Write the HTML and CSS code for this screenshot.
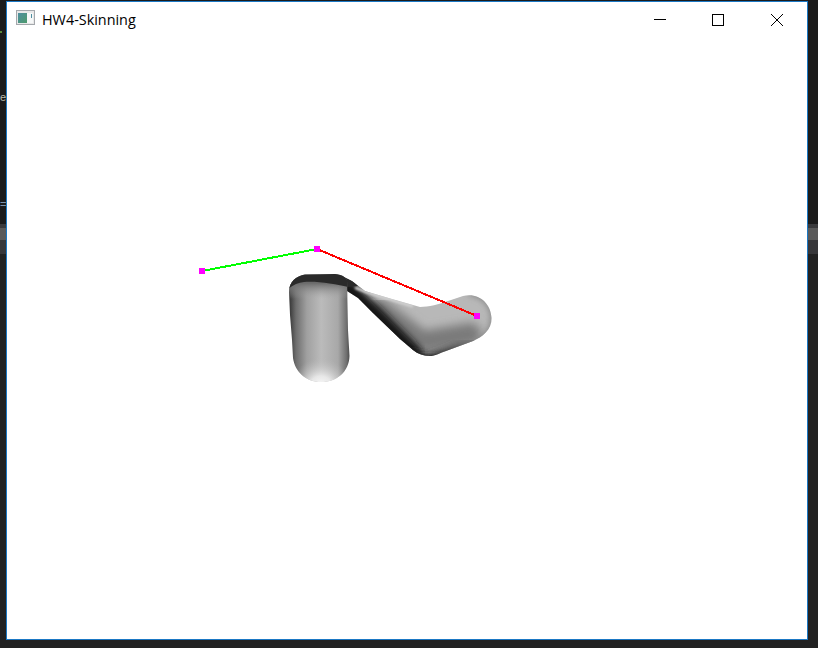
FILE: index.html
```html
<!DOCTYPE html>
<html lang="en">
<head>
<meta charset="utf-8">
<title>HW4-Skinning</title>
<link rel="stylesheet" href="styles.css">
</head>
<body>
<span class="stray stray-e">e</span>
<span class="stray stray-eq">=</span>
<span class="stray stray-dot"></span>
<main class="window">
  <header class="titlebar">
    <svg class="app-icon" width="20" height="16" viewBox="0 0 20 16">
      <defs>
        <linearGradient id="iconFill" x1="0" y1="0" x2="1" y2="1">
          <stop offset="0" stop-color="#4f8fa0"/>
          <stop offset="1" stop-color="#4d9a6c"/>
        </linearGradient>
      </defs>
      <rect x="0.5" y="0.5" width="18" height="14" fill="#e8e8e8" stroke="#a4a8ac"/>
      <rect x="2" y="3" width="9" height="10" fill="url(#iconFill)"/>
      <rect x="11" y="3" width="6" height="10" fill="#f6f8f8"/>
      <rect x="15" y="4" width="1" height="4" fill="#4f8fa0"/>
    </svg>
    <span class="title">HW4-Skinning</span>
    <div class="controls">
      <button class="control" aria-label="Minimize">
        <svg width="12" height="12" viewBox="0 0 12 12"><path d="M0 5.5H12" stroke="#000" fill="none"/></svg>
      </button>
      <button class="control" aria-label="Maximize">
        <svg width="12" height="12" viewBox="0 0 12 12"><rect x="0.5" y="0.5" width="11" height="11" stroke="#000" fill="none"/></svg>
      </button>
      <button class="control" aria-label="Close">
        <svg width="12" height="12" viewBox="0 0 12 12"><path d="M0 0L12 12M12 0L0 12" stroke="#000" fill="none"/></svg>
      </button>
    </div>
  </header>
  <svg class="viewport" viewBox="7 32 800 607" width="800" height="607">
    <defs>
      <clipPath id="armClip">
        <path d="M346 278L352 281L365 291L392 299L420 307C428 307 440 304 448 301L463 296C478 292 491 303 491.500 318C492 330 482 337 473 341L446 351C438 354 434 356 430 356C424 356 418 354 413 350L400 339L373 313L358 298L347 291Z"/>
      </clipPath>
      <clipPath id="bodyClip">
        <path d="M289 292C289 282 296 276 305 274.500L335 274C341 274.500 346 277 347 280L347.500 305L348 330L349.500 356C349 372 337 382 321 382C306 382 295 372 293 358L292 340L290 315Z"/>
      </clipPath>
      <filter id="blur1" x="-30%" y="-30%" width="160%" height="160%"><feGaussianBlur stdDeviation="1"/></filter>
      <filter id="blur3" x="-30%" y="-30%" width="160%" height="160%"><feGaussianBlur stdDeviation="3"/></filter>
      <filter id="blur5" x="-30%" y="-30%" width="160%" height="160%"><feGaussianBlur stdDeviation="5"/></filter>
      <linearGradient id="underside" gradientUnits="userSpaceOnUse" x1="425" y1="0" x2="478" y2="0">
        <stop offset="0" stop-color="#1a1a1a"/>
        <stop offset="0.5" stop-color="#3e3e3e"/>
        <stop offset="1" stop-color="#808080"/>
      </linearGradient>
      <linearGradient id="bodyShade" gradientUnits="userSpaceOnUse" x1="290" y1="0" x2="350" y2="0">
        <stop offset="0" stop-color="#3c3c3c"/>
        <stop offset="0.1" stop-color="#6e6e6e"/>
        <stop offset="0.28" stop-color="#a0a0a0"/>
        <stop offset="0.52" stop-color="#bbbbbb"/>
        <stop offset="0.8" stop-color="#a8a8a8"/>
        <stop offset="0.94" stop-color="#707070"/>
        <stop offset="1" stop-color="#484848"/>
      </linearGradient>
      <linearGradient id="underCap" gradientUnits="userSpaceOnUse" x1="0" y1="283" x2="0" y2="299">
        <stop offset="0" stop-color="#6a6a6a"/>
        <stop offset="1" stop-color="#a8a8a8" stop-opacity="0"/>
      </linearGradient>
      <radialGradient id="tipGlow" gradientUnits="userSpaceOnUse" cx="321" cy="388" r="30">
        <stop offset="0" stop-color="#ffffff"/>
        <stop offset="0.4" stop-color="#ececec" stop-opacity="0.9"/>
        <stop offset="1" stop-color="#bbbbbb" stop-opacity="0"/>
      </radialGradient>
    </defs>

    <g clip-path="url(#armClip)">
      <rect x="340" y="270" width="160" height="100" fill="#b8b8b8"/>
      <path class="soft" filter="url(#blur5)" d="M380 310L422 342L470 334" stroke="#7a7a7a" stroke-width="22"/>
      <path class="soft" filter="url(#blur3)" d="M345 296L373 323L406 356" stroke="#161616" stroke-width="32"/>
      <path class="soft" filter="url(#blur3)" d="M406 356L430 361L446 356L476 345" stroke="url(#underside)" stroke-width="15"/>
      <path class="soft" filter="url(#blur3)" d="M476 343C488 338 494 326 493 315C491 303 482 294 470 293" stroke="#747474" stroke-width="4"/>
      <path class="soft" filter="url(#blur1)" d="M356 288L366 292L392 300L412 306" stroke="#d4d4d4" stroke-width="2.500"/>
      <path class="cap" d="M344 276L354 282L358 286L347 287Z"/>
    </g>

    <g clip-path="url(#bodyClip)">
      <rect x="285" y="270" width="70" height="115" fill="url(#bodyShade)"/>
      <rect x="285" y="280" width="70" height="20" fill="url(#underCap)"/>
      <rect x="285" y="350" width="70" height="35" fill="url(#tipGlow)"/>
      <path class="cap" d="M284 293C289 287 296 283 304 282C318 281 335 284 350 287.500L350 270L284 270Z"/>
    </g>

    <line class="bone" x1="202" y1="271" x2="317" y2="249" stroke="#00ff00"/>
    <line class="bone" x1="317" y1="249" x2="477" y2="316" stroke="#ff0000"/>
    <rect class="joint" x="199" y="268" width="6" height="6"/>
    <rect class="joint" x="314" y="246" width="6" height="6"/>
    <rect class="joint" x="474" y="313" width="6" height="6"/>
  </svg>
</main>
</body>
</html>
```
FILE: styles.css
```css
html, body {
  margin: 0;
  padding: 0;
  height: 100%;
  overflow: hidden;
}

body {
  position: relative;
  width: 818px;
  height: 648px;
  background: linear-gradient(to bottom,
    #1b1b1b 0, #1b1b1b 224px,
    #3a3a3c 224px, #3a3a3c 228px,
    #5a5a5a 228px, #5a5a5a 240px,
    #37373a 240px, #37373a 254px,
    #222222 254px, #222222 100%);
  font-family: "Segoe UI", "Open Sans", "Noto Sans", sans-serif;
}

.stray {
  position: absolute;
  font-family: "Liberation Sans", sans-serif;
  font-size: 11px;
  line-height: 12px;
  color: #b9b9a8;
}

.stray-e {
  left: 0;
  top: 91px;
}

.stray-eq {
  left: 0;
  top: 198px;
  color: #7d94ad;
}

.stray-dot {
  left: 0;
  top: 31px;
  width: 2px;
  height: 2px;
  background: #5a8a3a;
}

.window {
  position: absolute;
  left: 6px;
  top: 1px;
  width: 800px;
  height: 637px;
  border: 1px solid #1b78c4;
  background: #ffffff;
  display: flex;
  flex-direction: column;
}

.titlebar {
  flex: 0 0 30px;
  display: flex;
  align-items: center;
  padding-left: 9px;
  background: #ffffff;
}

.app-icon {
  flex: none;
  margin-right: 6px;
  margin-top: 2px;
}

.title {
  font-size: 14.4px;
  line-height: 20px;
  color: #000000;
  margin-top: 6px;
}

.controls {
  display: flex;
  margin-left: auto;
  align-self: stretch;
}

.control {
  width: 58px;
  padding: 0;
  border: 0;
  background: none;
  display: flex;
  align-items: center;
  justify-content: center;
  margin-top: 6px;
}

.control:last-child {
  width: 60px;
}

.viewport {
  display: block;
  flex: none;
}

.soft {
  fill: none;
  stroke-linecap: round;
  stroke-linejoin: round;
}

.cap {
  fill: #2a2a2a;
}

.bone {
  stroke-width: 2;
  shape-rendering: crispEdges;
}

.joint {
  fill: #ff00ff;
  shape-rendering: crispEdges;
}
```
